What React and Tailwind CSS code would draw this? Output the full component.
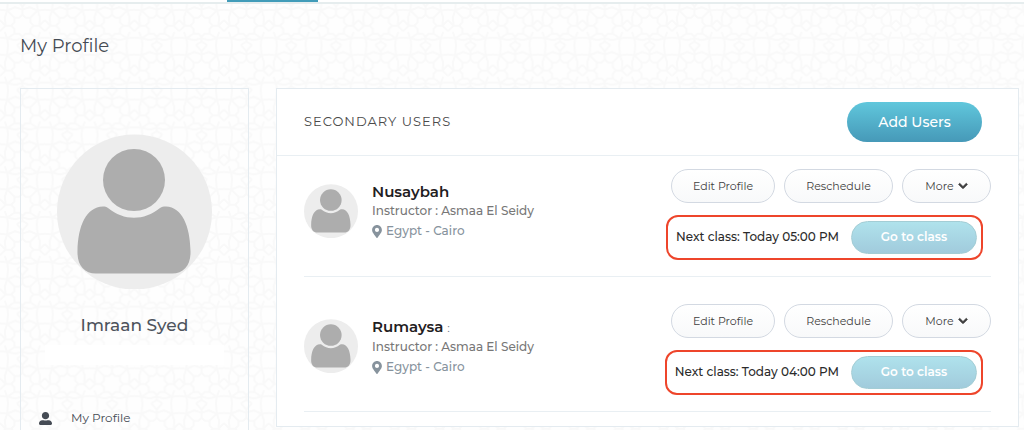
import { FaChevronDown, FaMapMarkerAlt, FaUserAlt } from "react-icons/fa";

const users = [
  { id: 1, name: "Nusaybah", instructor: "Asmaa El Seidy", location: "Egypt - Cairo", nextClass: "Today 05:00 PM" },
  { id: 2, name: "Rumaysa", suffix: ":", instructor: "Asmaa El Seidy", location: "Egypt - Cairo", nextClass: "Today 04:00 PM" },
];

// Faint rosette pattern behind the whole page
const PatternBackground = () => (
  <svg className="absolute inset-0 -z-10 h-full w-full" aria-hidden="true">
    <defs>
      <pattern id="rosettes" width="56" height="56" patternUnits="userSpaceOnUse" patternTransform="scale(0.8)">
        <g fill="none" stroke="#f9f9f9" strokeWidth="2.5" strokeLinejoin="round">
          <path d="M28 18l4 4 6 0 0 6 4 4-4 4 0 6-6 0-4 4-4-4-6 0 0-6-4-4 4-4 0-6 6 0z" />
          <path d="M28 18V8l-7-8M28 8l7-8M28 46v6l-7 4M28 52l7 4M14 32H7l-7-7M7 32l-7 7M42 32h7l7-7M49 32l7 7" />
          <path d="M18 22L9 13 0 12M9 13L10 0M38 22l9-9 9-1M47 13L46 0M18 42l-9 6-9-1M9 48l1 8M38 42l9 6 9-1M47 48l-1 8" />
          <path d="M9 13l10-4 9 3 9-3 10 4M9 13l-3 9 1 10M47 13l3 9-1 10M9 48l-3-8M47 48l3-8M9 48l10 2 9-2 9 2 10-2" />
        </g>
      </pattern>
    </defs>
    <rect width="100%" height="100%" fill="url(#rosettes)" />
  </svg>
);

const Avatar = ({ className }) => (
  <svg viewBox="0 0 155 155" className={className} aria-hidden="true">
    <circle cx="77.5" cy="78" r="77.5" fill="#ededed" />
    <circle cx="77" cy="46" r="31" fill="#adadad" />
    <path
      fill="#adadad"
      d="M46 72.5C48 72.5 49.5 72.8 51 74C67 87 87 87 103 74C105 72.6 106 72.5 109 72.5C125 73 133 92 133.5 117C134 131 127 139.5 115 139.5H39C27 139.5 20 131 20.5 117C21 92 29 73 46 72.5Z"
    />
  </svg>
);

const OutlineButton = ({ children, className }) => (
  <button
    type="button"
    className={`flex h-[34px] items-center justify-center rounded-full border border-[#d3d9e2] bg-linear-to-b from-white to-[#f8f9fa] text-[11px] text-[#3f3f3f] ${className}`}
  >
    {children}
  </button>
);

const UserRow = ({ user }) => (
  <li className="flex justify-between border-b border-[#e9eff3] pt-[27px] pb-4 first:pt-[13px]">
    <div className="flex items-start gap-3.5 pt-[15px]">
      <Avatar className="size-[54px] shrink-0" />
      <div>
        <h3 className="text-[15px] leading-4 font-semibold text-[#1f2022]">
          {user.name}
          {user.suffix && <span className="pl-1 text-xs font-normal text-gray-500">{user.suffix}</span>}
        </h3>
        <p className="pt-px text-xs leading-5 font-medium text-[#777777]">Instructor : {user.instructor}</p>
        <p className="flex items-center gap-1 text-xs leading-5 font-medium text-[#87939d]">
          <FaMapMarkerAlt className="h-[13px] w-2.5" />
          {user.location}
        </p>
      </div>
    </div>
    <div className="flex flex-col items-end gap-3">
      <div className="flex gap-[9px]">
        <OutlineButton className="w-[104px]">Edit Profile</OutlineButton>
        <OutlineButton className="w-[109px]">Reschedule</OutlineButton>
        <OutlineButton className="w-[89px] gap-1">
          More <FaChevronDown className="size-2.5 stroke-current stroke-[40px]" />
        </OutlineButton>
      </div>
      <div className="mr-2 flex h-[45px] items-center gap-3 rounded-xl border-2 border-[#ee452b] pr-1 pl-2">
        <span className="pb-0.5 text-xs font-medium text-[#2b2b2b]">Next class: {user.nextClass}</span>
        <button
          type="button"
          className="h-[33px] w-[126px] rounded-full border border-[#a3cdd5] bg-linear-to-b from-[#afe2ec] to-[#a1cbdc] pb-0.5 text-xs font-semibold text-white"
        >
          Go to class
        </button>
      </div>
    </div>
  </li>
);

const App = () => {
  return (
    <div className="relative isolate h-screen overflow-hidden bg-[#fefefe] font-[Montserrat,Inter,sans-serif]">
      <PatternBackground />

      {/* Bottom edge of the navigation */}
      <nav className="h-1 border-b-2 border-[#e6edee] bg-white">
        <div className="ml-[227px] h-0.5 w-[91px] bg-[#429cb9]" />
      </nav>

      <div className="pr-[5px] pl-5">
        <h1 className="pt-7 text-lg leading-7 text-[#454b54]">My Profile</h1>

        <div className="mt-7 flex items-start gap-[27px]">
          {/* Profile sidebar */}
          <aside className="w-[229px] shrink-0 border border-[#e4ebf0] pb-10">
            <Avatar className="mx-auto mt-[45px] size-[155px]" />
            <h2 className="mt-[22px] text-center text-[17px] leading-7 font-medium text-[#4d535c]">Imraan Syed</h2>
            <div className="mx-6 mt-1.5 h-5 bg-white" />
            <a href="#profile" className="mt-[43px] flex items-center gap-[19px] pl-[18px] text-xs leading-5 text-[#454b54]">
              <FaUserAlt className="size-[13px]" />
              My Profile
            </a>
          </aside>

          {/* Secondary users */}
          <main className="min-w-0 flex-1 border border-[#e4ebf0] bg-white pb-3.5">
            <header className="flex h-[67px] items-center justify-between border-b border-[#e9eff3] pr-9 pl-[27px]">
              <h2 className="text-[13px] tracking-[1px] text-[#4a4a4a]">SECONDARY USERS</h2>
              <button
                type="button"
                className="h-10 w-[135px] rounded-full bg-linear-to-b from-[#60c7dc] to-[#4699b8] text-sm font-medium text-white"
              >
                Add Users
              </button>
            </header>
            <ul className="px-[27px]">
              {users.map((user) => (
                <UserRow key={user.id} user={user} />
              ))}
            </ul>
          </main>
        </div>
      </div>
    </div>
  );
};

export default App;
